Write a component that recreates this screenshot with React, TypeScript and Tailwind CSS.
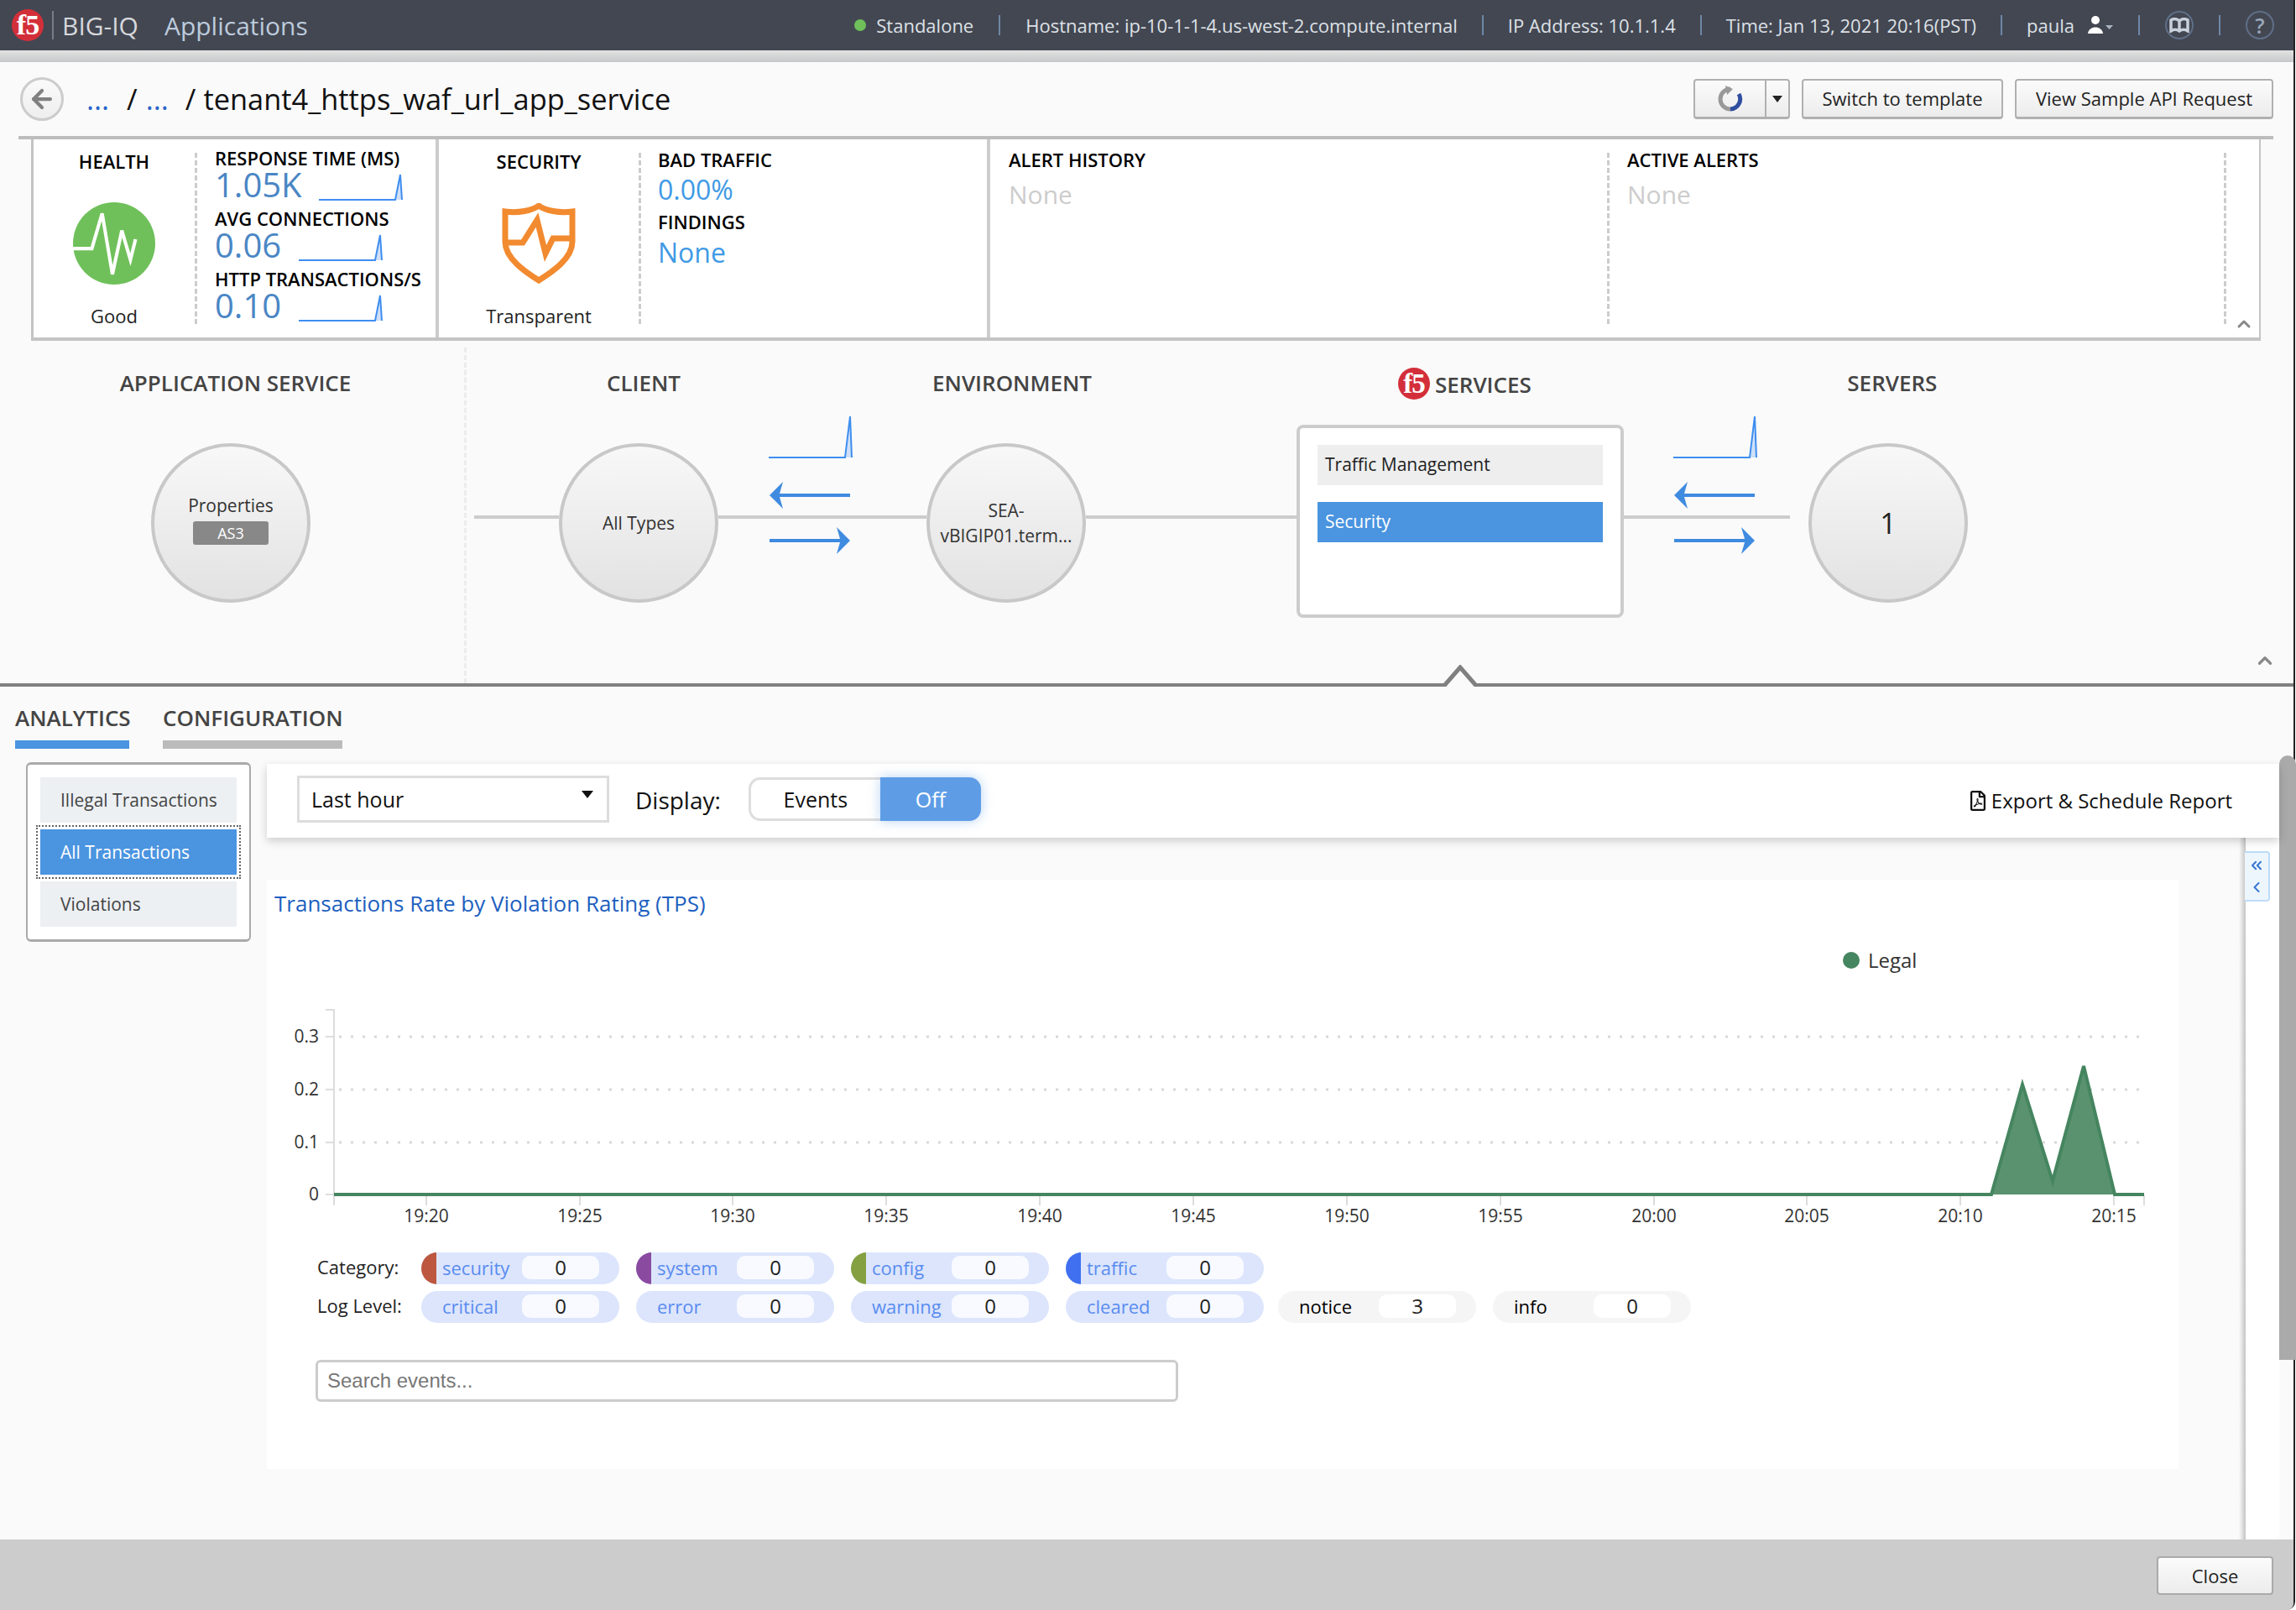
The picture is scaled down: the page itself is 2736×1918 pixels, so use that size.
import React from "react";
import { ArrowLeft, ChevronLeft, ChevronUp, ChevronsLeft } from "lucide-react";
import { FaRegFilePdf } from "react-icons/fa";

const categories = [
  { label: "security", color: "bg-[#bd5740]" },
  { label: "system", color: "bg-[#8a4aa0]" },
  { label: "config", color: "bg-[#85a040]" },
  { label: "traffic", color: "bg-[#4070f0]" },
];

const levels = [
  { label: "critical", value: "0" },
  { label: "error", value: "0" },
  { label: "warning", value: "0" },
  { label: "cleared", value: "0" },
];

const ticks = [
  ["19:20", 508],
  ["19:25", 691],
  ["19:30", 873],
  ["19:35", 1056],
  ["19:40", 1239],
  ["19:45", 1422],
  ["19:50", 1605],
  ["19:55", 1788],
  ["20:00", 1971],
  ["20:05", 2153],
  ["20:10", 2336],
  ["20:15", 2519],
] as const;

function F5Logo({ size }: { size: string }) {
  return (
    <div
      className={`${size} rounded-full bg-[#d32f3a] flex items-center justify-center text-white font-bold leading-none tracking-[-1px] [font-family:'Liberation_Serif',serif]`}
    >
      f5
    </div>
  );
}

function Spark({ w, h }: { w: number; h: number }) {
  return (
    <svg width={w} height={h} viewBox={`0 0 ${w} ${h}`} className="block">
      <path d={`M${w - 9} ${h - 2} L${w - 3} 1 L${w - 1} ${h - 2} Z`} fill="#cfe0f7" />
      <path d={`M0 ${h - 2} H${w - 9} L${w - 3} 1 L${w - 1} ${h - 2}`} fill="none" stroke="#3f8ef0" strokeWidth="2" />
    </svg>
  );
}

function ArrowGlyph({ left }: { left?: boolean }) {
  return (
    <svg width="96" height="32" viewBox="0 0 96 32" className="block">
      <path
        d={left ? "M0 16 L16 0 L12 14 H96 V18 H12 L16 32 Z" : "M96 16 L80 0 L84 14 H0 V18 H84 L80 32 Z"}
        fill="#3f8be0"
      />
    </svg>
  );
}

function Connector({ width, sparkOffset, arrowOffset }: { width: string; sparkOffset: string; arrowOffset: string }) {
  return (
    <div className={`${width} shrink-0 flex flex-col`}>
      <div className={sparkOffset}>
        <Spark w={100} h={52} />
      </div>
      <div className={`${arrowOffset} mt-[27px]`}>
        <ArrowGlyph left />
      </div>
      <div className="mt-[8px] h-[4px] bg-[#cccccc]" />
      <div className={`${arrowOffset} mt-[10px]`}>
        <ArrowGlyph />
      </div>
    </div>
  );
}

function Node({ children }: { children: React.ReactNode }) {
  return (
    <div className="mt-[33px] w-[190px] h-[190px] shrink-0 rounded-full border-[4px] border-[#c8c8c8] bg-gradient-to-b from-[#f8f8f8] to-[#e2e2e2] flex flex-col items-center justify-center text-[21px] leading-[30px] text-[#333] text-center">
      {children}
    </div>
  );
}

function Metric({ label, value, sparkGap }: { label: string; value: string; sparkGap: string }) {
  return (
    <div className="h-[72px]">
      <div className="text-[22px] leading-[28px] font-semibold text-black whitespace-nowrap">{label}</div>
      <div className="flex items-end h-[40px]">
        <span className="mb-[3px] text-[40px] leading-[38px] text-[#4a86c5]">{value}</span>
        <div className={`${sparkGap} mb-[2px]`}>
          <Spark w={100} h={33} />
        </div>
      </div>
    </div>
  );
}

function Pill({ label, value, color, muted, extra }: { label: string; value: string; color?: string; muted?: boolean; extra?: string }) {
  return (
    <div
      className={`relative w-[236px] h-[38px] rounded-[19px] overflow-hidden flex items-center pl-[26px] text-[22px] ${
        muted ? "bg-[#f5f5f5] text-black" : "bg-[#dce5fc] text-[#5a8cf0]"
      } ${extra ?? ""}`}
    >
      {color && <div className={`absolute left-0 top-0 bottom-0 w-[18px] ${color}`} />}
      <span className="-mt-[1px] -ml-[1px]">{label}</span>
      <div
        className={`absolute left-[120px] top-[4px] w-[92px] h-[28px] rounded-[10px] flex items-center justify-center text-[#222] text-[24px] ${
          muted ? "bg-white" : "bg-[#f8faff]"
        }`}
      >
        {value}
      </div>
    </div>
  );
}

function Sep({ wide }: { wide?: boolean }) {
  return <div className={`w-[2px] h-[24px] bg-[#6d87a6] ${wide ? "mx-[30px]" : "mx-[29px]"}`} />;
}

export default function App() {
  return (
    <div className="bg-white overflow-hidden h-[1918px] pr-[1px]">
      <div className="h-[1918px] flex flex-col bg-[#fafafa] text-[#222] border-r-[2px] border-[#222] rounded-br-[10px] [font-family:'Open_Sans',sans-serif]">
        {/* top bar */}
        <header className="h-[60px] shrink-0 bg-[#434752] flex items-center pl-[14px] pr-[23px]">
          <F5Logo size="w-[38px] h-[38px] text-[34px]" />
          <div className="w-[2px] h-[34px] bg-[#777c88] ml-[10px]" />
          <span className="ml-[10px] text-[30px] text-[#d6d8dc]">BIG-IQ</span>
          <span className="ml-[31px] text-[30px] text-[#bccbdc]">Applications</span>
          <div className="ml-auto flex items-center text-[22px] text-[#dde1e6]">
            <div className="w-[14px] h-[14px] rounded-full bg-[#6fc05a] mr-[12px]" />
            <span>Standalone</span>
            <Sep wide />
            <span>Hostname: ip-10-1-1-4.us-west-2.compute.internal</span>
            <Sep />
            <span>IP Address: 10.1.1.4</span>
            <Sep />
            <span>Time: Jan 13, 2021 20:16(PST)</span>
            <Sep />
            <span>paula</span>
            <svg width="30" height="24" viewBox="0 0 30 24" className="ml-[16px]">
              <circle cx="9" cy="6" r="5" fill="#fff" />
              <path d="M0 22 C1 12 17 12 18 22 Z" fill="#fff" />
              <path d="M21 12 H30 L25.5 17 Z" fill="#aab4c0" />
            </svg>
            <Sep wide />
            <div className="w-[34px] h-[34px] rounded-full border-[2px] border-[#5f6f88] flex items-center justify-center">
              <svg width="24" height="18" viewBox="0 0 24 18">
                <path d="M12 4 C9 1 5 1 2 3 V16 C5 14 9 14 12 16 C15 14 19 14 22 16 V3 C19 1 15 1 12 4 Z M12 4 V16" fill="none" stroke="#c8d0dc" strokeWidth="3.5" />
              </svg>
            </div>
            <Sep wide />
            <div className="w-[34px] h-[34px] rounded-full border-[2px] border-[#5f6f88] flex items-center justify-center text-[#9aa8bc] text-[25px] font-semibold leading-none">
              ?
            </div>
          </div>
        </header>
        <div className="h-[14px] shrink-0 bg-gradient-to-b from-[#e2e2e2] to-[#c6c8ca]" />

        {/* title row */}
        <div className="h-[88px] shrink-0 flex items-center pl-[24px] pr-[24px]">
          <div className="w-[52px] h-[52px] rounded-full border-[3px] border-[#cccccc] bg-gradient-to-b from-[#fafafa] to-[#eeeeee] flex items-center justify-center">
            <ArrowLeft size={34} color="#808080" strokeWidth={3} />
          </div>
          <div className="ml-[27px] text-[34.4px] leading-[50px] text-[#111] whitespace-nowrap">
            <span className="text-[#2a66c8]">...</span>
            <span className="ml-[21px]">/</span>
            <span className="ml-[10px] text-[#2a66c8]">...</span>
            <span className="ml-[20px]">/ tenant4_https_waf_url_app_service</span>
          </div>
          <div className="ml-auto flex items-center gap-[14px] text-[22px] text-[#222]">
            <div className="flex w-[115px] h-[48px] rounded-[4px] border-[2px] border-b-[3px] border-[#b0b0b0] bg-gradient-to-b from-[#fbfbfb] to-[#ececec]">
              <div className="w-[85px] flex items-center justify-center border-r-[2px] border-[#b0b0b0]">
                <svg width="32" height="32" viewBox="0 0 32 32">
                  <path d="M16 4 A12 12 0 1 0 16 28" fill="none" stroke="#999" strokeWidth="5" />
                  <path d="M16 28 A12 12 0 0 0 26 10" fill="none" stroke="#2f4ea0" strokeWidth="5" />
                  <path d="M10 0 L19 4 L12 11 Z" fill="#999" />
                </svg>
              </div>
              <div className="flex-1 flex items-center justify-center">
                <div className="w-0 h-0 border-l-[6px] border-r-[6px] border-t-[8px] border-l-transparent border-r-transparent border-t-[#222]" />
              </div>
            </div>
            <button className="w-[240px] h-[48px] rounded-[4px] border-[2px] border-b-[3px] border-[#b0b0b0] bg-gradient-to-b from-[#fbfbfb] to-[#ececec]">
              Switch to template
            </button>
            <button className="w-[308px] h-[48px] rounded-[4px] border-[2px] border-b-[3px] border-[#b0b0b0] bg-gradient-to-b from-[#fbfbfb] to-[#ececec]">
              View Sample API Request
            </button>
          </div>
        </div>

        {/* summary strip */}
        <div className="h-[4px] shrink-0 bg-[#bdbdbd] ml-[22px] mr-[24px]" />
        <div className="relative h-[240px] shrink-0 ml-[37px] mr-[39px] bg-white border-l-[3px] border-r-[2px] border-b-[4px] border-[#c4c4c4] flex">
          <div className="w-[483px] flex pt-[16px] border-r-[4px] border-[#cccccc] h-full shrink-0">
            <div className="w-[192px] h-[204px] flex flex-col items-center text-[22px]">
              <div className="font-semibold text-black leading-[30px] -mt-[5px]">HEALTH</div>
              <svg width="98" height="98" viewBox="0 0 96 96" className="mt-[34px] shrink-0">
                <circle cx="48" cy="48" r="48" fill="#6fc05a" />
                <path d="M0 54 H22 L34 13 L46 84 L57 33 L67 67 L73 43" fill="none" stroke="#fff" strokeWidth="4" />
              </svg>
              <div className="leading-[30px] text-[#222] mt-[22px]">Good</div>
            </div>
            <div className="h-[204px] border-l-[3px] border-dashed border-[#cccccc] pl-[21px] w-[285px]">
              <div className="-mt-[8px]">
                <Metric label="RESPONSE TIME (MS)" value="1.05K" sparkGap="ml-[20px]" />
                <Metric label="AVG CONNECTIONS" value="0.06" sparkGap="ml-[21px]" />
                <Metric label="HTTP TRANSACTIONS/S" value="0.10" sparkGap="ml-[21px]" />
              </div>
            </div>
          </div>
          <div className="w-[657px] flex pt-[16px] border-r-[4px] border-[#cccccc] h-full shrink-0">
            <div className="w-[238px] h-[204px] flex flex-col items-center text-[22px]">
              <div className="font-semibold text-black leading-[30px] -mt-[5px]">SECURITY</div>
              <svg width="88" height="96" viewBox="0 0 88 96" className="mt-[35px] shrink-0">
                <path
                  d="M44 3 C52 9 68 12 84 10 V46 C84 66 60 82 44 92 C28 82 4 66 4 46 V10 C20 12 36 9 44 3 Z"
                  fill="none"
                  stroke="#f28a30"
                  strokeWidth="7"
                />
                <path d="M4 47 H25 L42 20 L52 60 L61 42 H84" fill="none" stroke="#f28a30" strokeWidth="7" />
              </svg>
              <div className="leading-[30px] text-[#222] mt-[23px]">Transparent</div>
            </div>
            <div className="h-[204px] border-l-[3px] border-dashed border-[#cccccc] pl-[20px]">
              <div className="text-[22px] leading-[30px] font-semibold text-black -mt-[7px]">BAD TRAFFIC</div>
              <div className="text-[32px] leading-[44px] -mt-[1px] text-[#3f9ae5]">0.00%</div>
              <div className="text-[22px] leading-[30px] mt-[1px] font-semibold text-black">FINDINGS</div>
              <div className="text-[32px] leading-[44px] text-[#3f9ae5]">None</div>
            </div>
          </div>
          <div className="flex-1 flex pt-[16px] pl-[22px] text-[22px]">
            <div className="w-[713px]">
              <div className="font-semibold text-black leading-[30px] -mt-[7px]">ALERT HISTORY</div>
              <div className="text-[30px] leading-[40px] text-[#cccccc] mt-[7px]">None</div>
            </div>
            <div className="w-[738px] h-[204px] border-l-[3px] border-r-[3px] border-dashed border-[#cccccc] pl-[21px]">
              <div className="font-semibold text-black leading-[30px] -mt-[7px]">ACTIVE ALERTS</div>
              <div className="text-[30px] leading-[40px] text-[#cccccc] mt-[7px]">None</div>
            </div>
          </div>
          <ChevronUp size={24} color="#888" strokeWidth={3} className="absolute right-[6px] bottom-[4px]" />
        </div>

        {/* diagram */}
        <section className="relative h-[412px] shrink-0 flex border-b-[4px] border-[#808080]">
          <div className="w-[556px] shrink-0 border-r-[3px] border-dashed border-[#ececec] pt-[24px] mt-[8px]">
            <div className="pl-[8px] text-center text-[26px] leading-[36px] font-semibold text-[#444]">APPLICATION SERVICE</div>
            <div className="pl-[180px] mt-[54px]">
              <Node>
                <span>Properties</span>
                <span className="mt-[4px] mb-[10px] w-[90px] h-[28px] rounded-[3px] bg-[#888888] text-white text-[18px] leading-[28px]">AS3</span>
              </Node>
            </div>
          </div>
          <div className="flex-1 pt-[32px]">
            <div className="flex text-[26px] leading-[36px] font-semibold text-[#444]">
              <div className="ml-[111px] w-[200px] text-center">CLIENT</div>
              <div className="ml-[239px] w-[200px] text-center">ENVIRONMENT</div>
              <div className="ml-[360px] flex items-center">
                <F5Logo size="w-[38px] h-[38px] text-[33px] mr-[6px]" />
                <span className="mt-[2px]">SERVICES</span>
              </div>
              <div className="ml-[330px] w-[200px] text-center">SERVERS</div>
            </div>
            <div className="flex items-start pl-[9px] mt-[19px]">
              <div className="w-[101px] h-[4px] bg-[#cccccc] mt-[119px]" />
              <Node>All Types</Node>
              <Connector width="w-[248px]" sparkOffset="ml-[60px]" arrowOffset="ml-[61px]" />
              <Node>
                <span>SEA-</span>
                <span>vBIGIP01.term...</span>
              </Node>
              <div className="w-[251px] h-[4px] bg-[#cccccc] mt-[119px]" />
              <div className="mt-[11px] w-[390px] h-[230px] shrink-0 rounded-[8px] border-[4px] border-[#cccccc] bg-white px-[21px] pt-[20px] text-[21px]">
                <div className="h-[48px] bg-[#eeeeee] pl-[9px] flex items-center text-[#222]">Traffic Management</div>
                <div className="h-[48px] mt-[20px] bg-[#4a94e0] pl-[9px] flex items-center text-white">Security</div>
              </div>
              <Connector width="w-[198px]" sparkOffset="ml-[59px]" arrowOffset="ml-[60px]" />
              <div className="ml-[22px]">
                <Node>
                  <span className="text-[34px] text-[#222]">1</span>
                </Node>
              </div>
            </div>
          </div>
          <ChevronUp size={26} color="#888" strokeWidth={3} className="absolute right-[21px] bottom-[14px]" />
          <svg width="44" height="26" viewBox="0 0 44 26" className="absolute left-[1718px] -bottom-[4px]">
            <path d="M2 26 L22 2 L42 26 Z" fill="#fafafa" />
            <path d="M2 26 L22 3 L42 26" fill="none" stroke="#808080" strokeWidth="5" />
          </svg>
        </section>

        {/* tabs */}
        <div className="relative flex-1 flex flex-col min-h-0">
          <div className="flex pl-[18px] pt-[19px] text-[26px] leading-[36px] font-semibold text-[#444] gap-[40px]">
            <div className="w-[136px] text-center">
              <div className="mb-[9px]">ANALYTICS</div>
              <div className="h-[10px] bg-[#4a94e0]" />
            </div>
            <div className="w-[214px] text-center">
              <div className="mb-[9px]">CONFIGURATION</div>
              <div className="h-[10px] bg-[#bbbbbb]" />
            </div>
          </div>

          <div className="flex flex-1 pl-[31px] pt-[16px] min-h-0">
            {/* sidebar */}
            <div className="w-[268px] h-[214px] shrink-0 rounded-[6px] bg-white border-[2px] border-t-[3px] border-b-[3px] border-[#aaaaaa] pl-[15px] pr-[15px] pt-[15px] text-[21px] text-[#444]">
              <div className="h-[54px] bg-[#ecf0f3] pl-[24px] pt-[2px] flex items-center">Illegal Transactions</div>
              <div className="h-[54px] mt-[8px] bg-[#4a94e0] pl-[24px] pt-[2px] flex items-center text-white outline-[2px] outline-dotted outline-[#666] outline-offset-[3px]">
                All Transactions
              </div>
              <div className="h-[54px] mt-[8px] bg-[#ecf0f3] pl-[24px] pt-[2px] flex items-center">Violations</div>
            </div>

            {/* content */}
            <div className="ml-[19px] flex-1 flex flex-col pt-[2px] pr-[17px]">
              <div className="relative z-10 h-[88px] shrink-0 bg-white shadow-[0_4px_10px_rgba(0,0,0,0.18)] flex items-center pl-[36px] pr-[56px]">
                <div className="w-[372px] h-[56px] border-[3px] border-[#dddddd] flex items-center justify-between pl-[14px] pr-[16px] text-[25px] text-[#111] -mt-[4px]">
                  <span className="mt-[2px]">Last hour</span>
                  <div className="w-0 h-0 -mt-[12px] border-l-[7px] border-r-[7px] border-t-[9px] border-l-transparent border-r-transparent border-t-[#111]" />
                </div>
                <span className="ml-[31px] text-[28px] text-[#111] -mt-[2px]">Display:</span>
                <div className="ml-[33px] w-[277px] h-[52px] flex -mt-[4px] text-[25px]">
                  <div className="w-[157px] rounded-l-[14px] border-[3px] border-r-0 border-[#dddddd] flex items-center justify-center text-[#111] pt-[2px]">Events</div>
                  <div className="flex-1 rounded-r-[14px] bg-[#5e9de6] shadow-[0_0_14px_rgba(94,157,230,0.45)] flex items-center justify-center text-white pt-[2px]">Off</div>
                </div>
                <div className="ml-auto flex items-center text-[24px] text-[#111]">
                  <FaRegFilePdf size={24} className="mr-[4px]" />
                  Export &amp; Schedule Report
                </div>
              </div>

              <div className="flex flex-1 min-h-0">
                <div className="w-[2278px] h-[702px] mt-[50px] shrink-0 bg-white">
                  <div className="pl-[9px] pt-[10px] pb-[1px] text-[26px] leading-[36px] text-[#1d5fc0]">Transactions Rate by Violation Rating (TPS)</div>
                  <div className="mt-[32px] pl-[1878px] h-[34px] flex items-center text-[24px] text-[#333]">
                    <div className="w-[20px] h-[20px] rounded-full bg-[#45855f] mr-[10px]" />
                    Legal
                  </div>
                  <svg width="2278" height="280" viewBox="318 1190 2278 280" className="block mt-[29px]">
                    <path d="M388 1203 H398 V1436" fill="none" stroke="#dddddd" strokeWidth="2" />
                    {[1235, 1298, 1361].map((y) => (
                      <g key={y}>
                        <path d={`M388 ${y} H398`} stroke="#dddddd" strokeWidth="2" />
                        <path d={`M404 ${y} H2560`} stroke="#d8d8d8" strokeWidth="3" strokeDasharray="3 11" />
                      </g>
                    ))}
                    <path d="M388 1423 H398" stroke="#dddddd" strokeWidth="2" />
                    {[["0.3", 1235], ["0.2", 1298], ["0.1", 1361], ["0", 1423]].map(([t, y]) => (
                      <text key={t} x="380" y={Number(y) + 7} textAnchor="end" fontSize="21" fill="#333">
                        {t}
                      </text>
                    ))}
                    {ticks.map(([t, x]) => (
                      <g key={t}>
                        <path d={`M${x} 1424 V1436`} stroke="#dddddd" strokeWidth="2" />
                        <text x={x} y="1456" textAnchor="middle" fontSize="21" fill="#333">
                          {t}
                        </text>
                      </g>
                    ))}
                    <path d="M2555 1424 V1436" stroke="#dddddd" strokeWidth="2" />
                    <path d="M398 1423 H2373 L2410 1292 L2446 1407 L2483 1270 L2520 1423 H2555" fill="#5a9270" stroke="#45855f" strokeWidth="4" />
                  </svg>
                  <div className="pl-[60px] mt-[22px] flex items-center">
                    <span className="w-[124px] text-[22px] text-[#222] -mt-[3px]">Category:</span>
                    <div className="flex gap-[20px]">
                      {categories.map((c) => (
                        <Pill key={c.label} label={c.label} value="0" color={c.color} />
                      ))}
                    </div>
                  </div>
                  <div className="pl-[60px] mt-[8px] flex items-center">
                    <span className="w-[124px] text-[22px] text-[#222] -mt-[3px]">Log Level:</span>
                    <div className="flex gap-[20px]">
                      {levels.map((l) => (
                        <Pill key={l.label} label={l.label} value={l.value} />
                      ))}
                      <Pill label="notice" value="3" muted extra="-ml-[3px]" />
                      <Pill label="info" value="0" muted />
                    </div>
                  </div>
                  <div className="pl-[58px] mt-[44px]">
                    <input
                      className="w-[1028px] h-[50px] rounded-[6px] border-[3px] border-[#cccccc] bg-white pl-[11px] text-[24px] placeholder:text-[#777] outline-none [font-family:'Liberation_Sans',sans-serif]"
                      placeholder="Search events..."
                    />
                  </div>
                </div>
                <div className="ml-[72px] w-[8px] shrink-0 bg-gradient-to-r from-[#fafafa] to-[#c4c4c4]" />
                <div className="relative flex-1 bg-white">
                  <div className="absolute -left-[1px] top-[16px] w-[30px] h-[60px] rounded-r-[4px] border-[2px] border-l-0 border-[#bcdcf8] bg-[#eef6fd] flex flex-col items-center justify-center gap-[6px]">
                    <ChevronsLeft size={20} color="#3a78d0" strokeWidth={2.5} />
                    <ChevronLeft size={20} color="#3a78d0" strokeWidth={2.5} />
                  </div>
                </div>
              </div>
            </div>
          </div>

          {/* page scrollbar */}
          <div className="absolute -right-[3px] top-[82px] w-[20px] h-[720px] rounded-t-[10px] bg-[#aaaaaa]" />
        </div>

        {/* footer */}
        <footer className="h-[84px] shrink-0 bg-[#cccccc] rounded-br-[8px] flex items-center justify-end pr-[24px]">
          <button className="w-[139px] h-[46px] mt-[2px] rounded-[4px] bg-gradient-to-b from-[#fbfbfb] to-[#ececec] border-[2px] border-[#aaaaaa] text-[22px] text-[#222]">Close</button>
        </footer>
      </div>
    </div>
  );
}
